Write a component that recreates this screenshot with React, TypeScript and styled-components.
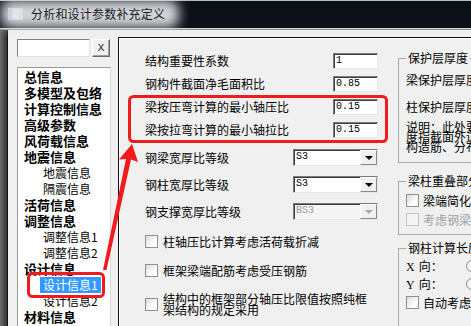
import styled, { createGlobalStyle } from "styled-components";

const GlobalStyle = createGlobalStyle`
    * { box-sizing: border-box; }
    html, body { margin: 0; padding: 0; background: #f0f0f0; }
    body { font-family: "Noto Sans CJK SC", "Noto Sans", sans-serif; }
`;

const StyledWindow = styled.div`
    position: relative;
    width: 471px;
    height: 326px;
    overflow: hidden;
    display: flex;
    flex-direction: column;
    background: #0c1017;
`;

const StyledTitleBar = styled.div`
    height: 29px;
    flex: none;
    display: flex;
    align-items: center;
    gap: 8px;
    padding-left: 8px;
    background: #0c1017;
    box-shadow: inset 0 1px 0 #b8bcc2;
    border-bottom: 1px solid #d4d6d8;
`;

const StyledTitleText = styled.span`
    position: relative;
    z-index: 0;
    font-size: 12px;
    line-height: 14px;
    color: #1c1c1c;
    letter-spacing: 0.2px;
    &::before {
        content: "";
        position: absolute;
        inset: -7px -14px -7px -30px;
        background: rgba(226, 229, 233, 0.92);
        filter: blur(6px);
        border-radius: 10px;
        z-index: -1;
    }
`;

const StyledBody = styled.div`
    flex: 1;
    display: flex;
    min-height: 0;
    border-top: 1px solid #8c8c8c;
`;

const StyledFrame = styled.div`
    width: 8px;
    flex: none;
    background: linear-gradient(to right, #6c6c6c, #3a3a3a 85%);
    border-right: 1px solid #111;
`;

const StyledClient = styled.div`
    flex: 1;
    display: flex;
    min-width: 0;
    background: #f0f0f0;
`;

const StyledLeftColumn = styled.div`
    width: 110px;
    flex: none;
    display: flex;
    flex-direction: column;
    padding: 9px 0 0 9px;
`;

const StyledSearchRow = styled.div`
    display: flex;
    gap: 2px;
    height: 18px;
`;

const StyledSearchInput = styled.div`
    width: 73px;
    height: 18px;
    background: #fff;
    border: 1px solid;
    border-color: #828282 #e3e3e3 #e3e3e3 #828282;
`;

const StyledClearButton = styled.div`
    width: 18px;
    height: 18px;
    display: flex;
    align-items: center;
    justify-content: center;
    background: #f0f0f0;
    border: 1px solid;
    border-color: #fff #6a6a6a #6a6a6a #fff;
    box-shadow: inset -1px -1px 0 #a0a0a0;
    font-family: "Liberation Mono", monospace;
    font-size: 11px;
    color: #10204a;
`;

const StyledTree = styled.div`
    margin-top: 10px;
    width: 94px;
    flex: 1;
    background: #fff;
    border: 1px solid #9a9a9a;
    border-right-color: #d8d8d8;
    border-bottom: none;
    padding-top: 1px;
`;

const StyledTreeRow = styled.div<{ $child: boolean }>`
    display: flex;
    align-items: center;
    height: 16px;
    padding-left: ${(p) => (p.$child ? "22px" : "6px")};
    white-space: nowrap;
`;

const StyledTreeLabel = styled.span<{ $child: boolean; $selected: boolean }>`
    display: block;
    height: 16px;
    line-height: 16px;
    padding: ${(p) => (p.$child ? "0 3px" : "0")};
    font-size: ${(p) => (p.$child ? "12px" : "13px")};
    font-weight: ${(p) => (p.$child ? 400 : 700)};
    color: ${(p) => (p.$selected ? "#fff" : "#000")};
    background: ${(p) => (p.$selected ? "#3399ff" : "transparent")};
`;

const StyledPanel = styled.div`
    margin-top: 7px;
    flex: 1;
    display: flex;
    align-items: flex-start;
    min-width: 0;
    border-top: 1px solid #111;
    border-left: 1px solid #111;
    box-shadow: inset 1px 1px 0 #fff;
    padding: 13px 0 0 26px;
`;

const StyledFormColumn = styled.div`
    width: 233px;
    flex: none;
    display: flex;
    flex-direction: column;
    padding-top: 2px;
`;

const StyledStack = styled.div<{ $gap: number; $top?: number }>`
    display: flex;
    flex-direction: column;
    gap: ${(p) => p.$gap}px;
    margin-top: ${(p) => p.$top ?? 0}px;
`;

const StyledFieldRow = styled.div`
    display: flex;
    align-items: center;
    justify-content: space-between;
`;

const StyledLabel = styled.span<{ $disabled?: boolean }>`
    font-size: 12px;
    line-height: 16px;
    white-space: nowrap;
    color: ${(p) => (p.$disabled ? "#a0a0a0" : "#000")};
`;

const StyledValueBox = styled.div<{ $width: number; $height: number; $disabled?: boolean }>`
    width: ${(p) => p.$width}px;
    height: ${(p) => p.$height}px;
    display: flex;
    background: ${(p) => (p.$disabled ? "#f4f4f4" : "#fff")};
    border: 1px solid;
    border-color: #7a7a7a #e6e6e6 #e6e6e6 #7a7a7a;
    box-shadow: inset 1px 1px 0 #3c3c3c;
    font-family: "Liberation Mono", monospace;
    font-size: 10px;
    line-height: 14px;
    color: ${(p) => (p.$disabled ? "#a0a0a0" : "#000")};
`;

const StyledValueText = styled.span`
    flex: 1;
    padding-left: 2px;
`;

const StyledDropButton = styled.div<{ $disabled?: boolean }>`
    width: 17px;
    height: 100%;
    display: flex;
    align-items: center;
    justify-content: center;
    background: #f0f0f0;
    border: 1px solid;
    border-color: #fff #8a8a8a #8a8a8a #fff;
    & > span {
        width: 0;
        height: 0;
        border-left: 4px solid transparent;
        border-right: 4px solid transparent;
        border-top: 4px solid ${(p) => (p.$disabled ? "#a8a8a8" : "#000")};
    }
`;

const StyledCheckRow = styled.div<{ $top?: number; $gap?: number }>`
    display: flex;
    align-items: center;
    gap: ${(p) => p.$gap ?? 5}px;
    margin-top: ${(p) => p.$top ?? 0}px;
`;

const StyledCheckBox = styled.span<{ $disabled?: boolean }>`
    width: 13px;
    height: 13px;
    flex: none;
    border: 1px solid ${(p) => (p.$disabled ? "#c4c4c4" : "#8e8f8f")};
    background: ${(p) => (p.$disabled ? "#f4f4f4" : "linear-gradient(135deg, #dcdcdc, #fff 70%)")};
`;

const StyledCheckText = styled.span<{ $disabled?: boolean }>`
    font-size: 12px;
    line-height: 11px;
    white-space: pre;
    color: ${(p) => (p.$disabled ? "#a0a0a0" : "#000")};
`;

const StyledRightColumn = styled.div`
    width: 200px;
    flex: none;
    margin-left: 20px;
    display: flex;
    flex-direction: column;
`;

const StyledGroupBox = styled.fieldset<{ $top: number; $bottom: number }>`
    margin: ${(p) => p.$top}px 0 0 0;
    padding: 0 0 ${(p) => p.$bottom}px 7px;
    border: 1px solid #aaaaaa;
    min-width: 0;
`;

const StyledLegend = styled.legend`
    padding: 0 2px;
    font-size: 12px;
    line-height: 14px;
    white-space: nowrap;
`;

const StyledLine = styled.div<{ $top: number }>`
    margin-top: ${(p) => p.$top}px;
    font-size: 12px;
    line-height: 14px;
    white-space: nowrap;
`;

const StyledNote = styled.div`
    margin-top: 8px;
    font-size: 12px;
    line-height: 10px;
    white-space: nowrap;
`;

const StyledDirRow = styled.div<{ $top: number }>`
    display: flex;
    align-items: center;
    margin-top: ${(p) => p.$top}px;
    height: 14px;
`;

const StyledDirLabel = styled.span`
    width: 60px;
    font-size: 12px;
    line-height: 14px;
    & > b {
        font-family: "Liberation Serif", serif;
        font-weight: 400;
        margin-right: 4px;
    }
`;

const StyledRadio = styled.span`
    width: 12px;
    height: 12px;
    border-radius: 50%;
    border: 1px solid #8e8f8f;
    background: #f4f4f4;
`;

const StyledOverlay = styled.svg`
    position: absolute;
    left: 0;
    top: 0;
    pointer-events: none;
`;

const treeItems = [
    { label: "总信息", child: false },
    { label: "多模型及包络", child: false },
    { label: "计算控制信息", child: false },
    { label: "高级参数", child: false },
    { label: "风荷载信息", child: false },
    { label: "地震信息", child: false },
    { label: "地震信息", child: true },
    { label: "隔震信息", child: true },
    { label: "活荷信息", child: false },
    { label: "调整信息", child: false },
    { label: "调整信息1", child: true },
    { label: "调整信息2", child: true },
    { label: "设计信息", child: false },
    { label: "设计信息1", child: true, selected: true },
    { label: "设计信息2", child: true },
    { label: "材料信息", child: false },
];

const fields = [
    { label: "结构重要性系数", value: "1" },
    { label: "钢构件截面净毛面积比", value: "0.85" },
    { label: "梁按压弯计算的最小轴压比", value: "0.15" },
    { label: "梁按拉弯计算的最小轴拉比", value: "0.15" },
];

const selects = [
    { label: "钢梁宽厚比等级", value: "S3" },
    { label: "钢柱宽厚比等级", value: "S3" },
    { label: "钢支撑宽厚比等级", value: "BS3", disabled: true },
];

const checks = [
    "柱轴压比计算考虑活荷载折减",
    "框架梁端配筋考虑受压钢筋",
    "结构中的框架部分轴压比限值按照纯框\n架结构的规定采用",
];

function AppIcon() {
    return (
        <svg width="15" height="12" viewBox="0 0 15 12">
            <rect x="0.5" y="0.5" width="14" height="11" fill="#e6eaee" stroke="#8a9098" />
            <rect x="1" y="1" width="3" height="10" fill="#2b7d86" />
            <rect x="4" y="1" width="2" height="10" fill="#7cc3e8" />
            <rect x="11" y="2" width="2" height="8" fill="#9aa3ad" />
        </svg>
    );
}

function TreePanel() {
    return (
        <StyledTree>
            {treeItems.map((item, index) => (
                <StyledTreeRow key={index} $child={item.child}>
                    <StyledTreeLabel $child={item.child} $selected={!!item.selected}>
                        {item.label}
                    </StyledTreeLabel>
                </StyledTreeRow>
            ))}
        </StyledTree>
    );
}

function Annotations() {
    return (
        <StyledOverlay width="471" height="326" viewBox="0 0 471 326">
            <rect x="129.5" y="96.5" width="257" height="45" rx="4" fill="none" stroke="#f21b1b" strokeWidth="3" />
            <rect x="28.5" y="273.5" width="75" height="23" rx="4" fill="none" stroke="#f21b1b" strokeWidth="3" />
            <polygon points="132,144 138,162 131,159.5 106.5,270 103,270 126,159 119,159.5" fill="#f21b1b" />
        </StyledOverlay>
    );
}

export default function App() {
    return (
        <>
            <GlobalStyle />
            <StyledWindow>
                <StyledTitleBar>
                    <AppIcon />
                    <StyledTitleText>分析和设计参数补充定义</StyledTitleText>
                </StyledTitleBar>
                <StyledBody>
                    <StyledFrame />
                    <StyledClient>
                        <StyledLeftColumn>
                            <StyledSearchRow>
                                <StyledSearchInput />
                                <StyledClearButton>X</StyledClearButton>
                            </StyledSearchRow>
                            <TreePanel />
                        </StyledLeftColumn>
                        <StyledPanel>
                            <StyledFormColumn>
                                <StyledStack $gap={7}>
                                    {fields.map((f) => (
                                        <StyledFieldRow key={f.label}>
                                            <StyledLabel>{f.label}</StyledLabel>
                                            <StyledValueBox $width={45} $height={16}>
                                                <StyledValueText>{f.value}</StyledValueText>
                                            </StyledValueBox>
                                        </StyledFieldRow>
                                    ))}
                                </StyledStack>
                                <StyledStack $gap={10} $top={11}>
                                    {selects.map((s) => (
                                        <StyledFieldRow key={s.label}>
                                            <StyledLabel>{s.label}</StyledLabel>
                                            <StyledValueBox $width={85} $height={17} $disabled={s.disabled}>
                                                <StyledValueText>{s.value}</StyledValueText>
                                                <StyledDropButton $disabled={s.disabled}>
                                                    <span />
                                                </StyledDropButton>
                                            </StyledValueBox>
                                        </StyledFieldRow>
                                    ))}
                                </StyledStack>
                                <StyledStack $gap={16} $top={15}>
                                    {checks.map((c) => (
                                        <StyledCheckRow key={c}>
                                            <StyledCheckBox />
                                            <StyledCheckText>{c}</StyledCheckText>
                                        </StyledCheckRow>
                                    ))}
                                </StyledStack>
                            </StyledFormColumn>
                            <StyledRightColumn>
                                <StyledGroupBox $top={0} $bottom={10}>
                                    <StyledLegend>保护层厚度</StyledLegend>
                                    <StyledLine $top={8}>梁保护层厚度(mm)</StyledLine>
                                    <StyledLine $top={13}>柱保护层厚度(mm)</StyledLine>
                                    <StyledNote>
                                        说明：此处要求填写的保护层厚
                                        <br />
                                        度指截面外边缘至最外层钢筋
                                        <br />
                                        构造筋、分布筋等)外缘的距离
                                    </StyledNote>
                                </StyledGroupBox>
                                <StyledGroupBox $top={11} $bottom={8}>
                                    <StyledLegend>梁柱重叠部分简化</StyledLegend>
                                    <StyledCheckRow $top={6} $gap={4}>
                                        <StyledCheckBox />
                                        <StyledCheckText>梁端简化为刚域</StyledCheckText>
                                    </StyledCheckRow>
                                    <StyledCheckRow $top={6} $gap={4}>
                                        <StyledCheckBox $disabled />
                                        <StyledCheckText $disabled>考虑钢梁刚域</StyledCheckText>
                                    </StyledCheckRow>
                                </StyledGroupBox>
                                <StyledGroupBox $top={6} $bottom={20}>
                                    <StyledLegend>钢柱计算长度系数</StyledLegend>
                                    <StyledDirRow $top={4}>
                                        <StyledDirLabel>
                                            <b>X</b>向：
                                        </StyledDirLabel>
                                        <StyledRadio />
                                    </StyledDirRow>
                                    <StyledDirRow $top={4}>
                                        <StyledDirLabel>
                                            <b>Y</b>向：
                                        </StyledDirLabel>
                                        <StyledRadio />
                                    </StyledDirRow>
                                    <StyledCheckRow $top={5} $gap={4}>
                                        <StyledCheckBox />
                                        <StyledCheckText>自动考虑有无侧移</StyledCheckText>
                                    </StyledCheckRow>
                                </StyledGroupBox>
                            </StyledRightColumn>
                        </StyledPanel>
                    </StyledClient>
                </StyledBody>
                <Annotations />
            </StyledWindow>
        </>
    );
}
